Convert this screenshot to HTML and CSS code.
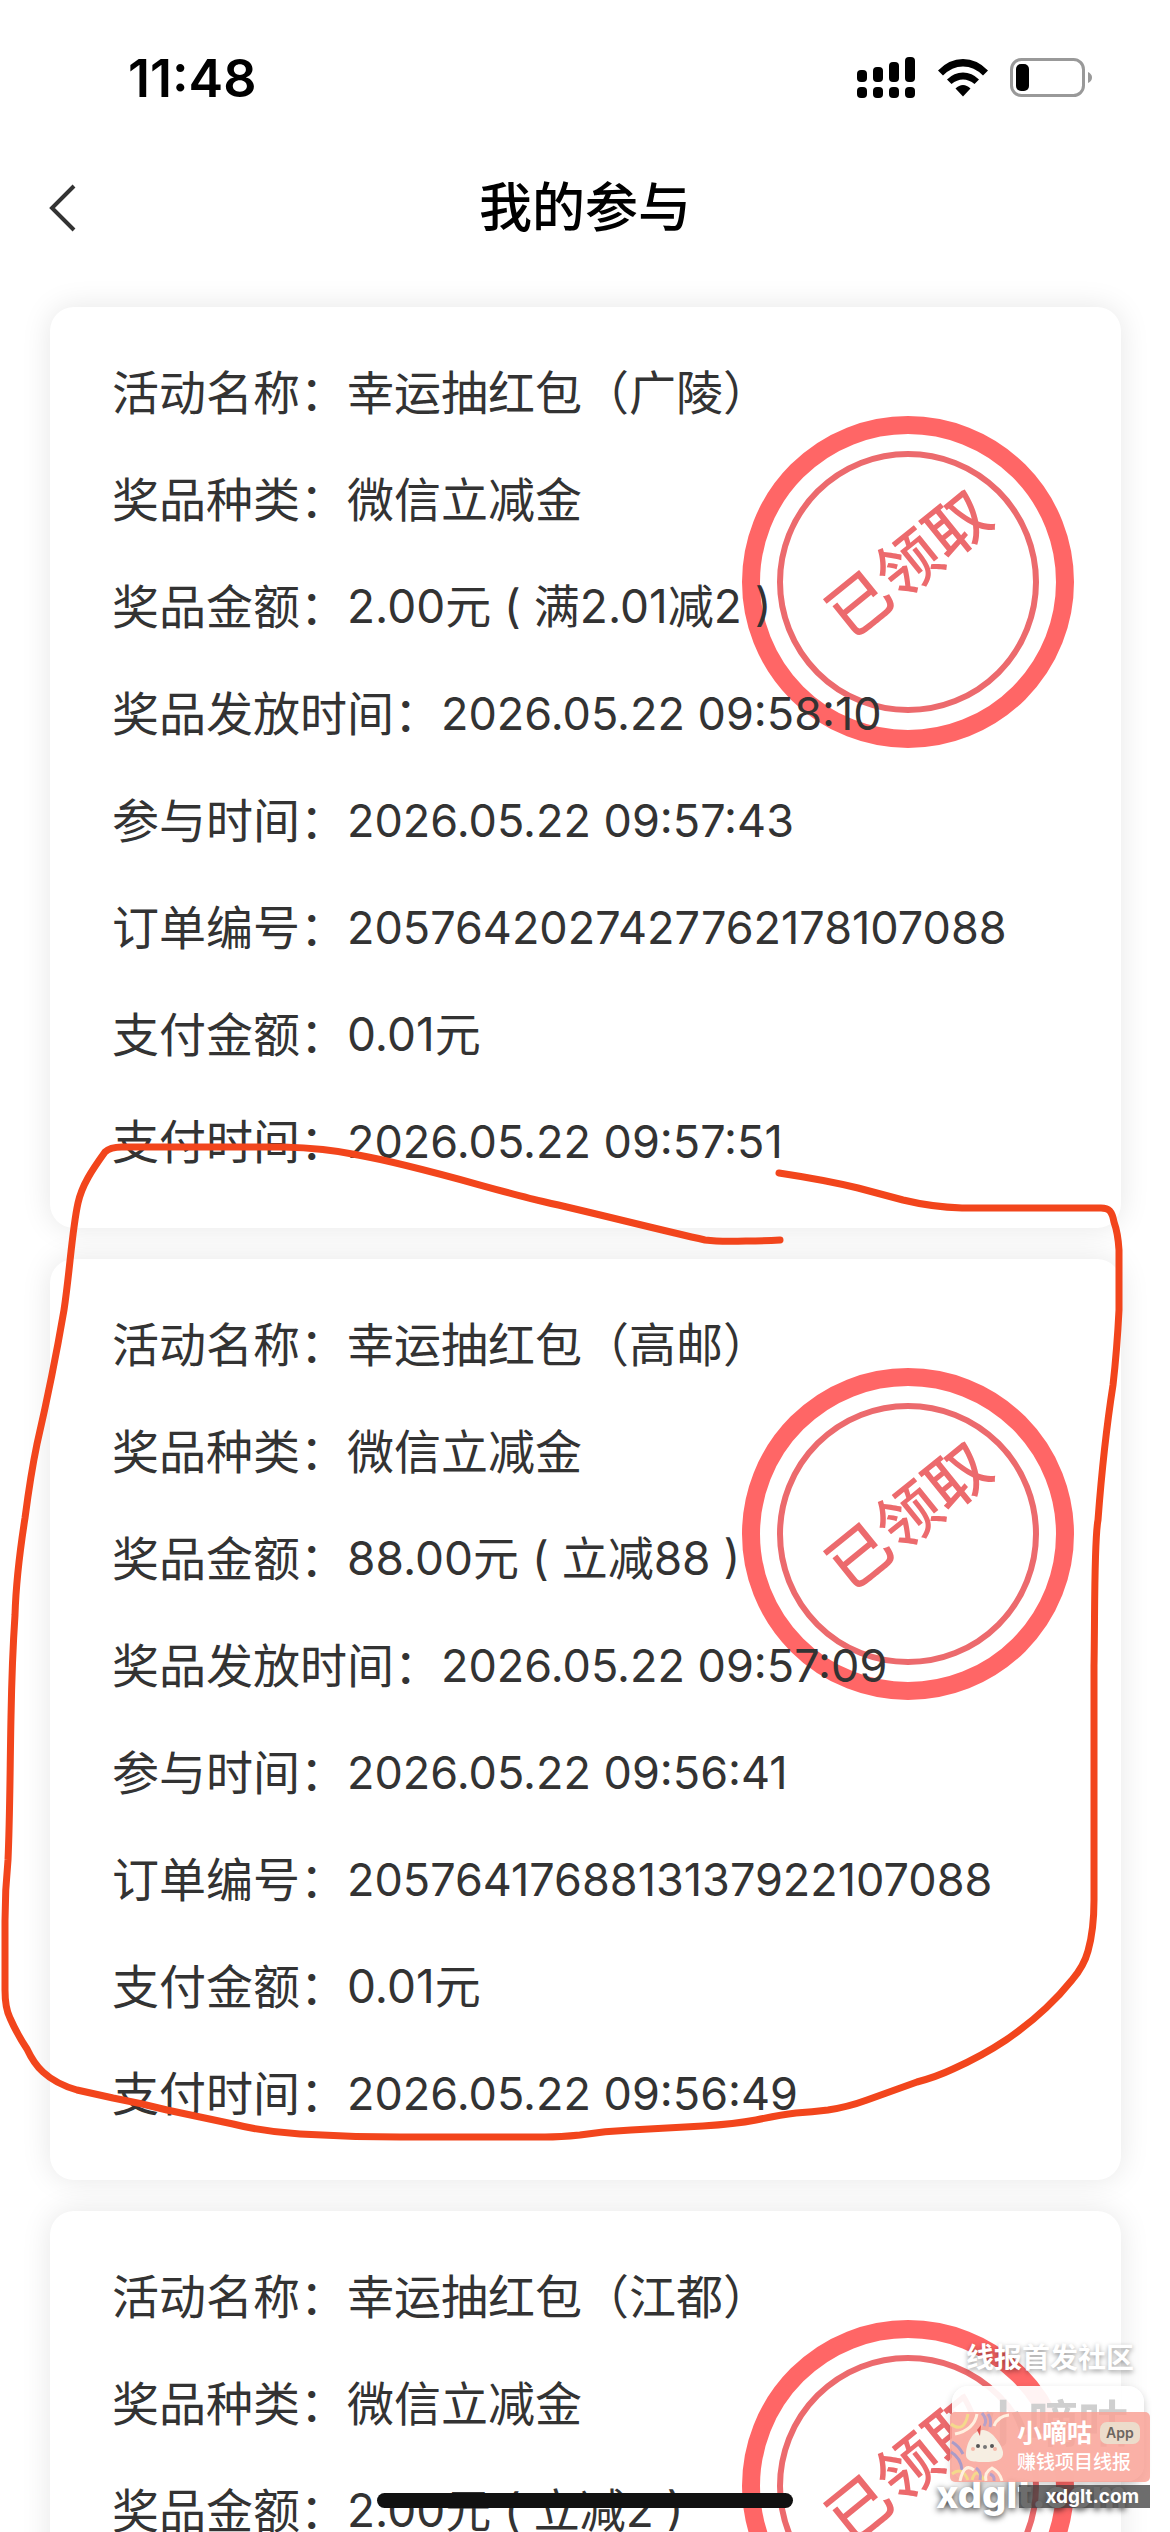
FILE: index.html
```html
<!DOCTYPE html>
<html lang="zh-CN">
<head>
<meta charset="utf-8">
<meta name="viewport" content="width=device-width, initial-scale=1">
<title>我的参与</title>
<link rel="stylesheet" href="styles.css">
</head>
<body>
<div class="screen">
  <div class="status-bar">
    <time class="clock">11:48</time>
    <div class="status-icons">
      <svg width="60" height="42" viewBox="0 0 60 42" aria-hidden="true"><g fill="#000"><rect x="1" y="13" width="10" height="12" rx="4"/><rect x="17" y="10" width="10" height="15" rx="4"/><rect x="33" y="5" width="10" height="20" rx="4"/><rect x="49" y="0" width="10" height="25" rx="4"/><rect x="1" y="30" width="10" height="11" rx="4"/><rect x="17" y="30" width="10" height="11" rx="4"/><rect x="33" y="30" width="10" height="11" rx="4"/><rect x="49" y="30" width="10" height="11" rx="4"/></g></svg>
      <svg width="50" height="38" viewBox="0 0 50 38" aria-hidden="true"><path fill="#000" d="M0 11.500Q11 0 25 0T50 11.500L45 16.500Q36 7.500 25 7.500T5 16.500ZM9 20.500Q16 13.500 25 13.500T41 20.500L36.500 25Q31 20.500 25 20.500T13.500 25ZM17.500 29.500Q21 26 25 26T32.500 29.500L25 37.500Z"/></svg>
      <svg width="82" height="40" viewBox="0 0 82 40" aria-hidden="true"><rect x="1.500" y="1.500" width="72" height="36" rx="10" fill="none" stroke="#999" stroke-width="3"/><rect x="6" y="6" width="13" height="27" rx="5" fill="#000"/><path d="M78 14q4 2 4 5.500t-4 5.500z" fill="#999"/></svg>
    </div>
  </div>
  <header class="nav">
    <button class="back" type="button" aria-label="返回"><svg width="28" height="48" viewBox="0 0 28 48" aria-hidden="true"><path d="M26 2L4 24L26 46" fill="none" stroke="#333" stroke-width="4"/></svg></button>
    <h1>我的参与</h1>
  </header>
  <main class="records">
    <article class="card">
      <div class="stamp"><span>已领取</span></div>
      <dl>
        <div><dt>活动名称：</dt><dd>幸运抽红包（广陵）</dd></div>
        <div><dt>奖品种类：</dt><dd>微信立减金</dd></div>
        <div><dt>奖品金额：</dt><dd class="money">2.00元 ( 满2.01减2 )</dd></div>
        <div><dt>奖品发放时间：</dt><dd class="num">2026.05.22 09:58:10</dd></div>
        <div><dt>参与时间：</dt><dd class="num">2026.05.22 09:57:43</dd></div>
        <div><dt>订单编号：</dt><dd class="num">2057642027427762178107088</dd></div>
        <div><dt>支付金额：</dt><dd class="money">0.01元</dd></div>
        <div><dt>支付时间：</dt><dd class="num">2026.05.22 09:57:51</dd></div>
      </dl>
    </article>
    <article class="card">
      <div class="stamp"><span>已领取</span></div>
      <dl>
        <div><dt>活动名称：</dt><dd>幸运抽红包（高邮）</dd></div>
        <div><dt>奖品种类：</dt><dd>微信立减金</dd></div>
        <div><dt>奖品金额：</dt><dd class="money">88.00元 ( 立减88 )</dd></div>
        <div><dt>奖品发放时间：</dt><dd class="num">2026.05.22 09:57:09</dd></div>
        <div><dt>参与时间：</dt><dd class="num">2026.05.22 09:56:41</dd></div>
        <div><dt>订单编号：</dt><dd class="num">2057641768813137922107088</dd></div>
        <div><dt>支付金额：</dt><dd class="money">0.01元</dd></div>
        <div><dt>支付时间：</dt><dd class="num">2026.05.22 09:56:49</dd></div>
      </dl>
    </article>
    <article class="card">
      <div class="stamp"><span>已领取</span></div>
      <dl>
        <div><dt>活动名称：</dt><dd>幸运抽红包（江都）</dd></div>
        <div><dt>奖品种类：</dt><dd>微信立减金</dd></div>
        <div><dt>奖品金额：</dt><dd class="money">2.00元 ( 立减2 )</dd></div>
      </dl>
    </article>
  </main>

  <svg class="scribble" viewBox="0 0 1170 2532" preserveAspectRatio="xMidYMin meet" aria-hidden="true">
    <path d="M780 1240C765 1241 755 1241 746 1241Q720 1242 705 1240C660 1230 590 1212 545 1202S420 1166 358 1155Q325 1148 283 1147H122Q110 1147 105 1152C92 1170 82 1185 78 1203C72 1230 70 1270 64 1310C58 1345 46 1405 37 1444C32 1468 28 1495 25 1518C20 1550 16 1580 15 1615Q12 1660 11 1717C10 1765 10 1815 8 1860Q5 1890 5 1921V1990Q5 2008 10 2018Q17 2034 27 2049Q34 2064 43 2072Q56 2084 77 2090Q95 2094 113 2098Q140 2103 167 2110L233 2124Q265 2132 300 2134Q350 2137 400 2137H545Q560 2137 580 2135Q605 2131 631 2130L703 2126Q735 2124 756 2120Q780 2115 796 2113Q812 2112 828 2110Q848 2107 867 2100L917 2082Q936 2077 953 2069Q982 2056 1006 2040Q1028 2025 1046 2008Q1060 1995 1072 1980Q1084 1966 1088 1951Q1094 1930 1094 1900V1666C1095 1610 1094 1540 1098 1520C1101 1480 1106 1430 1113 1385Q1117 1350 1119 1310V1250Q1118 1233 1114 1222C1112 1211 1109 1208 1101 1208H962Q932 1207 903 1200L858 1188Q825 1180 779 1173"/>
  </svg>

  <aside class="watermark">
    <p class="wm-title">线报首发社区</p>
    <p class="wm-ghost">小嘀咕</p>
    <p class="wm-site">xdglt.com</p>
    <div class="wm-banner">
      <svg width="60" height="70" viewBox="0 0 60 70" aria-hidden="true">
        <g fill="none" stroke-width="3"><path d="M1 12Q14 22 18 2" stroke="#f4d98c"/><path d="M5 22Q24 18 27 2" stroke="#fff0e0"/><path d="M2 30Q9 34 13 42M1 40Q11 46 12 58" stroke="#a99bc8"/><path d="M32 1Q38 8 34 14M38 2Q42 8 40 15" stroke="#b7a0c9"/><path d="M44 14Q48 4 59 3" stroke="#fff0e0"/><path d="M2 62Q12 54 18 68M22 68Q26 54 34 68" stroke="#f4d98c"/><path d="M10 69Q14 50 24 58M36 69Q34 60 42 56Q50 60 52 69" stroke="#fff0e0"/><path d="M30 68Q32 60 26 56M44 69Q45 64 40 62" stroke="#b7a0c9"/></g>
        <path d="M16 41C17 29 24 18 33 18S52 33 53 40C54 48 46 50 35 50S15 50 16 41Z" fill="#f6eee2"/>
        <path d="M27 18L31 13L30 24Z" fill="#d9534f"/>
        <circle cx="28" cy="34" r="2" fill="#555"/><circle cx="42" cy="34" r="2" fill="#555"/><ellipse cx="35" cy="35" rx="2" ry="2" fill="#777"/><circle cx="23" cy="37" r="2" fill="#f5b8a8"/><circle cx="45" cy="37" r="2" fill="#f5b8a8"/>
      </svg>
      <div class="wm-copy">
        <div class="wm-name"><strong>小嘀咕</strong><span>App</span></div>
        <div class="wm-sub">赚钱项目线报</div>
      </div>
    </div>
    <div class="wm-url">xdglt.com</div>
  </aside>
  <div class="home-indicator"></div>
</div>
</body>
</html>
```

FILE: styles.css
```css
* { box-sizing: border-box; }
body { margin: 0; background: #fff; color: #333; font-family: Inter, "Noto Sans CJK SC", sans-serif; }
p { margin: 0; }
.screen { position: relative; height: 100vh; overflow: hidden; }
.status-bar { display: flex; justify-content: space-between; align-items: center; height: 156px; padding: 0 78px 0 128px; }
.clock { color: #000; font-size: 52px; font-weight: 600; }
.status-icons { display: flex; align-items: center; gap: 22px; }
.nav { display: grid; grid-template-columns: 120px 1fr 120px; align-items: center; height: 104px; }
.back { justify-self: start; padding: 0 0 0 48px; border: 0; background: none; display: flex; }
.nav h1 { margin: 0; text-align: center; color: #000; font-size: 53px; font-weight: 500; line-height: 80px; }
.records { display: flex; flex-direction: column; gap: 31px; padding: 47px 49px 47px 50px; }
.card { position: relative; flex: none; padding: 32px 62px 33px; border-radius: 24px; background: #fff; box-shadow: 0 0 30px rgba(0, 0, 0, 0.1); }
.card dl { position: relative; margin: 0; font-size: 47px; line-height: 107px; }
.card dl div { display: flex; white-space: nowrap; }
.card dd { margin: 0; }
.card .num { font-size: 45px; }
.card .money { font-size: 46px; }
.stamp { position: absolute; top: 109px; right: 47px; display: grid; place-items: center; width: 332px; height: 332px; padding-bottom: 36px; border: 18px solid #f66; border-radius: 50%; color: #ec6a6d; }
.stamp::before { content: ""; position: absolute; inset: 17px; border: 6px solid; border-radius: 50%; }
.stamp span { font-size: 63px; font-weight: 500; line-height: 64px; transform: rotate(-39deg); }

.scribble { position: absolute; top: 0; left: 0; width: 100%; pointer-events: none; }
.scribble path { fill: none; stroke: #f2451c; stroke-width: 7; stroke-linecap: round; stroke-linejoin: round; }

.watermark { position: absolute; right: 20px; bottom: 24px; display: flex; flex-direction: column; align-items: flex-end; width: 214px; color: #fff; }
.wm-title { margin-bottom: 37px; padding-right: 16px; font-size: 28px; font-weight: 700; line-height: 34px; text-shadow: 0 2px 5px rgba(0, 0, 0, 0.4); white-space: nowrap; }
.wm-ghost { position: absolute; right: 6px; bottom: 27px; width: 192px; height: 95px; padding-right: 16px; border-radius: 16px; background: rgba(255, 255, 255, 0.92); box-shadow: 0 4px 8px rgba(0, 0, 0, 0.2); color: #cfcfcf; font-size: 50px; font-weight: 700; line-height: 76px; text-align: right; white-space: nowrap; }
.wm-site { position: absolute; left: 0; bottom: -6px; font-size: 38px; font-weight: 800; line-height: 40px; text-shadow: 0 2px 6px rgba(0, 0, 0, 0.8); }
.wm-banner { position: relative; display: flex; align-items: center; gap: 7px; width: 200px; height: 70px; border-radius: 5px; background: rgba(249, 162, 150, 0.85); }
.wm-copy { display: flex; flex-direction: column; gap: 4px; white-space: nowrap; }
.wm-name { display: flex; align-items: center; gap: 8px; }
.wm-name strong { font-size: 25px; line-height: 28px; }
.wm-name span { padding: 0 6px; border-radius: 7px; background: #ecdccb; color: #6d6660; font-size: 14px; font-weight: 600; line-height: 22px; }
.wm-sub { font-size: 19px; font-weight: 500; line-height: 24px; }
.wm-url { position: relative; width: 131px; margin-top: 3px; padding-right: 11px; background: rgba(60, 60, 60, 0.75); font-size: 19px; font-weight: 700; line-height: 23px; text-align: right; }

.home-indicator { position: absolute; left: 50%; bottom: 24px; width: 416px; height: 15px; margin-left: -208px; border-radius: 8px; background: #111; }
```
